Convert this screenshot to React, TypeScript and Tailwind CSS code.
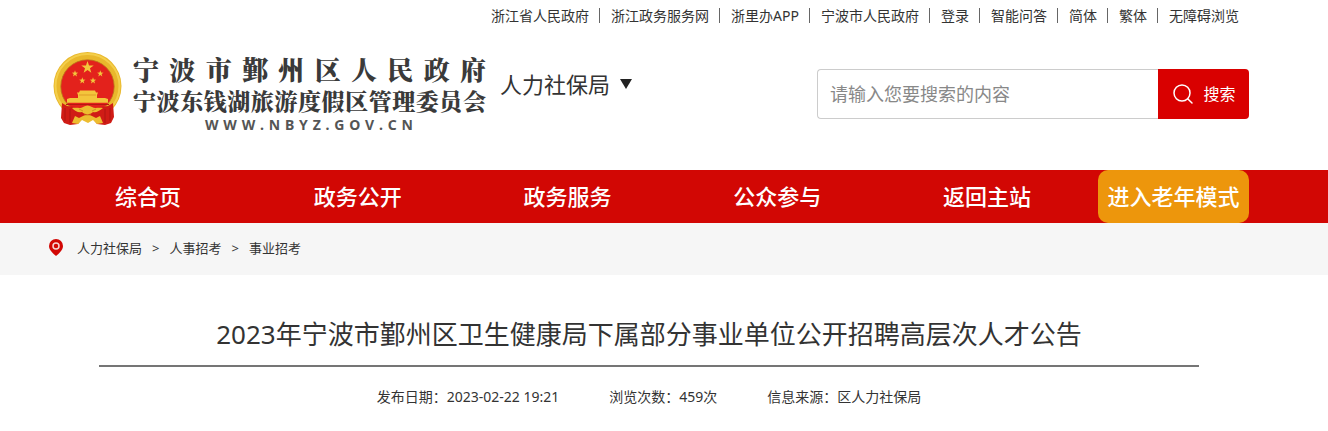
import React from 'react';
import { Search } from 'lucide-react';

const topLinks = [
  '浙江省人民政府',
  '浙江政务服务网',
  '浙里办APP',
  '宁波市人民政府',
  '登录',
  '智能问答',
  '简体',
  '繁体',
  '无障碍浏览'
];

const navItems = ['综合页', '政务公开', '政务服务', '公众参与', '返回主站'];

const breadcrumbs = ['人力社保局', '人事招考', '事业招考'];

const meta = [
  { label: '发布日期', value: '2023-02-22 19:21' },
  { label: '浏览次数', value: '459次' },
  { label: '信息来源', value: '区人力社保局' }
];

function Star({ x, y, r }: { x: number; y: number; r: number }) {
  const points = Array.from({ length: 10 }, (_, i) => {
    const radius = i % 2 === 0 ? r : r * 0.4;
    const angle = (Math.PI / 5) * i - Math.PI / 2;
    return `${x + radius * Math.cos(angle)},${y + radius * Math.sin(angle)}`;
  }).join(' ');
  return <polygon points={points} fill="#f3c63c" />;
}

function Emblem() {
  return (
    <svg viewBox="0 0 70 75" className="w-[70px] h-[75px] shrink-0" aria-hidden="true">
      <circle cx="35.5" cy="35" r="34" fill="#e9b82c" />
      <circle cx="35.5" cy="35" r="32" fill="none" stroke="#f4cf4b" strokeWidth="2" />
      <circle cx="35.5" cy="35.5" r="26.7" fill="#e3221c" stroke="#b9791a" strokeWidth="0.8" />
      <Star x={35.5} y={16.5} r={6.5} />
      <Star x={23} y={22.7} r={3.4} />
      <Star x={48.3} y={22.7} r={3.4} />
      <Star x={30.3} y={29.7} r={3.4} />
      <Star x={41} y={29.7} r={3.4} />
      {/* Tiananmen */}
      <path d="M28 39.5h15l1 2h2l-1 2.5v3h8l3 1v3.8H15V48l3-1h8v-3l-1-2.5h2z" fill="#f3c63c" />
      <path d="M27 44h17" stroke="#d68e1d" strokeWidth="0.7" />
      <path d="M14 53.5h43" stroke="#b61813" strokeWidth="1" />
      {/* Drape and gear */}
      <path d="M10 52l5 3 8 1 8 2h9l8-2 8-1 5-3 1 14-3 6-6 2-8-1-4-5H30l-4 5-8 1-6-2-3-5z" fill="#d01c16" />
      <path d="M13 57v13M18 58v14M53 58v14M58 57v13" stroke="#b01511" strokeWidth="1" />
      <path d="M20 57c5-1 8 1 11-1 3-2 6-2 9 0 3 2 6 0 11 1-4 3-7 5-10 4-3 3-8 3-11 0-4 1-7-1-10-4z" fill="#edbd30" />
      <path d="M20 72l3-7 4 2 4-2c3-2 6-2 9 0l4 2 4-2 3 7-6 1-4-4-5 3-6-3-4 4z" fill="#edbd30" />
      <path d="M27 58l4 2M44 58l-4 2M32 64h7" stroke="#c8871a" strokeWidth="0.8" />
    </svg>
  );
}

function PinIcon() {
  return (
    <svg viewBox="0 0 14 17" className="w-[14px] h-[17px] mb-[3px]" aria-hidden="true">
      <path d="M7 0a7 7 0 0 0-7 7c0 4 4 7.500 7 10 3-2.500 7-6 7-10a7 7 0 0 0-7-7z" fill="#d20704" />
      <circle cx="7" cy="7" r="3" fill="none" stroke="#f7d4d4" strokeWidth="1.500" />
    </svg>
  );
}

// Spreads the characters evenly over the width of the line
function SpreadText({ text, className }: { text: string; className: string }) {
  return (
    <p className={`flex justify-between ${className}`}>
      {text.split('').map((char, index) => (
        <span key={index}>{char}</span>
      ))}
    </p>
  );
}

export default function App() {
  return (
    <div className="bg-white text-[#333] font-['Noto_Sans','Noto_Sans_CJK_SC',sans-serif]">
      <header className="pr-[30px]">
        <div className="max-w-[1200px] mx-auto">
          {/* Top links */}
          <nav className="h-[30px] flex items-center justify-end text-sm">
            {topLinks.map((link, index) => (
              <a
                key={link}
                href="#"
                className={`pl-[11px] pr-[10px] leading-[15px] whitespace-nowrap ${index < topLinks.length - 1 ? 'border-r border-[#666]' : ''}`}
              >
                {link}
              </a>
            ))}
          </nav>

          {/* Logo, department, search */}
          <div className="h-[140px] flex items-start pt-[2px]">
            <a href="#" className="flex items-start pl-[3px] pt-[19px]">
              <Emblem />
              <div className="w-[353px] ml-[11px] pt-[2px] text-[#3a3a3a] font-['Noto_Serif_CJK_SC','Noto_Sans_CJK_SC',serif]">
                <SpreadText text="宁波市鄞州区人民政府" className="text-[26px] leading-8 font-black" />
                <SpreadText text="宁波东钱湖旅游度假区管理委员会" className="text-[23px] leading-8 font-black" />
                <SpreadText
                  text="WWW.NBYZ.GOV.CN"
                  className="w-[208px] ml-[72px] text-sm leading-4 font-bold text-[#555] font-['Noto_Sans',sans-serif]"
                />
              </div>
            </a>
            <button className="flex items-center gap-[10px] mt-9 ml-[14px] text-[22px] leading-8 whitespace-nowrap">
              人力社保局
              <svg viewBox="0 0 12 10" className="w-3 h-[10px]" aria-hidden="true">
                <path d="M0 0h12L6 10z" fill="#222" />
              </svg>
            </button>
            <form className="flex w-[432px] h-[50px] mt-[37px] ml-auto" onSubmit={e => e.preventDefault()}>
              <input
                type="text"
                aria-label="搜索"
                placeholder="请输入您要搜索的内容"
                className="flex-1 min-w-0 px-3 text-lg border border-r-0 border-[#ccc] rounded-l outline-none placeholder:text-[#888]"
              />
              <button type="submit" className="w-[91px] flex items-center justify-center gap-2 bg-[#d90000] text-white text-base rounded-r">
                <Search className="w-6 h-6" strokeWidth={1.5} />
                搜索
              </button>
            </form>
          </div>
        </div>
      </header>

      {/* Main navigation */}
      <nav className="bg-[#d20704] pr-[30px]">
        <div className="max-w-[1200px] mx-auto h-[53px] flex gap-3 text-[22px] text-white text-center leading-[53px] font-medium">
          {navItems.map(item => (
            <a key={item} href="#" className="flex-1">
              {item}
            </a>
          ))}
          <a href="#" className="w-[151px] bg-[#ed960c] rounded-[10px]">
            进入老年模式
          </a>
        </div>
      </nav>

      {/* Breadcrumb */}
      <div className="bg-[#f6f6f6] pr-[30px]">
        <div className="max-w-[1200px] mx-auto h-[52px] flex items-center text-[13px]">
          <PinIcon />
          <div className="flex gap-[10px] ml-[14px]">
            {breadcrumbs.map((crumb, index) => (
              <React.Fragment key={crumb}>
                {index > 0 && <span>&gt;</span>}
                <a href="#">{crumb}</a>
              </React.Fragment>
            ))}
          </div>
        </div>
      </div>

      {/* Article heading */}
      <main className="pr-[30px]">
        <div className="max-w-[1100px] mx-auto text-center">
          <h1 className="pt-10 pb-3 text-[26px] leading-[38px] border-b-2 border-[#757575]">
            2023年宁波市鄞州区卫生健康局下属部分事业单位公开招聘高层次人才公告
          </h1>
          <div className="flex justify-center gap-[50px] py-5 text-sm">
            {meta.map(item => (
              <span key={item.label}>
                {item.label}：{item.value}
              </span>
            ))}
          </div>
        </div>
      </main>
    </div>
  );
}
